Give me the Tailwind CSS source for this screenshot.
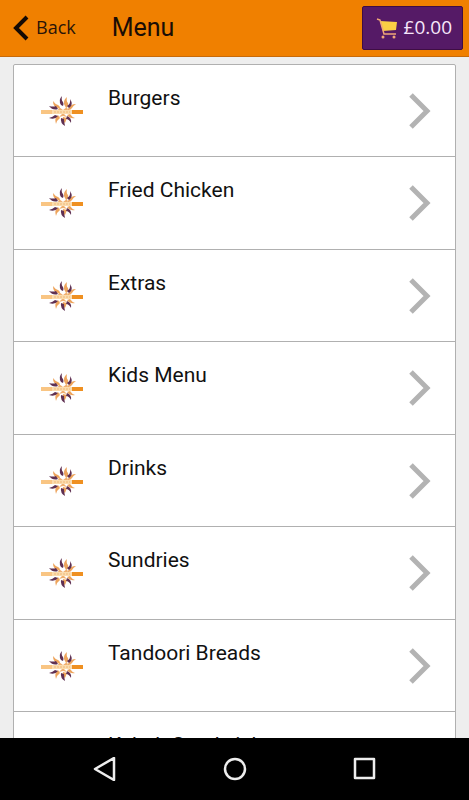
<!DOCTYPE html>
<html lang="en">
<head>
  <meta charset="utf-8"/>
  <meta name="viewport" content="width=device-width, initial-scale=1.0"/>
  <title>Menu</title>
  <script src="https://cdn.jsdelivr.net/npm/@tailwindcss/browser@4"></script>
</head>
<body class="bg-[#eeeeee] font-[Roboto,sans-serif] text-[#111111]">
  <svg class="hidden">
    <symbol id="logo" viewBox="0 0 44 36">
      <!-- flames -->
      <g fill="#eda45c">
        <path d="M25 13q-3-5 2-9q-1 4 1 6q1 3-2 5z"/>
        <path d="M28 16q2-5 8-5q-3 2-4 4q-1 2-4 2z"/>
        <path d="M18 15q-5-1-5-7q2 3 5 4q2 1 2 3z"/>
        <path d="M18 22q-4 3-2 9q1-4 4-6z"/>
        <path d="M27 22q3 4 8 3q-3-1-5-4z"/>
        <path d="M23 24q-1 4 2 6l2-5z"/>
      </g>
      <g fill="#5f3052">
        <path d="M21 12q-3-5 1-9q-1 4 1 6q1 2 0 4z"/>
        <path d="M27 13q4-2 3-7q4 6-1 9z"/>
        <path d="M18 16q-5 2-9-3q4 1 7 0z"/>
        <path d="M18 23q-3 4-9 2q4-1 6-3z"/>
        <path d="M21 25q-1 5 4 8q-1-4-1-7z"/>
        <path d="M27 23q5 2 4 7q-2-4-5-4z"/>
      </g>
      <path d="M19 14l4 3 4-3 1 3H18zM19 24l4-4 4 4-4-1z" fill="#f0b070"/>
      <path d="M1 17h11v4H1z" fill="#f9c583"/>
      <path d="M12 17h20v4H12z" fill="#fbdcae"/>
      <path d="M14 19h16" stroke="#f0b878" stroke-width="1" stroke-dasharray="2 1"/>
      <path d="M32 17h11v4H32z" fill="#ef9021"/>
    </symbol>
    <symbol id="chevron" viewBox="0 0 24 40">
      <path d="M4 4l16 16L4 36" fill="none" stroke="#b3b3b3" stroke-width="5"/>
    </symbol>
  </svg>

  <div class="flex h-screen flex-col overflow-hidden">
    <header class="flex h-[57px] shrink-0 items-center border-b border-[#c76a0a] bg-[#f08000] pr-1.5 pl-3">
      <a href="#" class="flex items-center gap-1.5 font-['Open_Sans',sans-serif] text-[18px] text-[#2a1408]">
        <svg class="h-7 w-[18px]" viewBox="0 0 18 28" fill="none" stroke="#140a04" stroke-width="4">
          <path d="M15 3L4 14l11 11"/>
        </svg>
        <span class="pb-0.5">Back</span>
      </a>
      <h1 class="ml-9 flex-1 text-[25px] text-[#1a0d05]">Menu</h1>
      <button class="flex h-11 w-[101px] items-center justify-end gap-1.5 rounded-xs border border-[#3f0d44] bg-[#551a66] pr-2.5 font-['Open_Sans',sans-serif] text-[19px] text-[#f6e6fa]">
        <svg class="h-[22px] w-[22px]" viewBox="0 0 22 22">
          <path d="M4 4l17 1-1 8-13 1z" fill="#fbcf45"/>
          <path d="M1 2l3 1 4 14h12" fill="none" stroke="#f0a878" stroke-width="1.5"/>
          <circle cx="7" cy="20" r="1.5" fill="#f0a878"/>
          <circle cx="18" cy="20" r="1.5" fill="#f0a878"/>
        </svg>
        <span class="pb-0.5">£0.00</span>
      </button>
    </header>

    <main class="min-h-0 flex-1 overflow-hidden px-[13px] pt-[7px]">
      <ul class="rounded-t-xs border border-[#b0b0b0] bg-white text-[21px] leading-6">
        <li class="h-[92px] border-b border-[#b0b0b0]">
          <a href="#" class="flex h-full items-center pr-6 pl-[26px]">
            <svg class="h-9 w-11"><use href="#logo"/></svg>
            <span class="ml-6 flex-1 self-start pt-[21px]">Burgers</span>
            <svg class="h-10 w-6"><use href="#chevron"/></svg>
          </a>
        </li>
        <li class="h-[93px] border-b border-[#b0b0b0]">
          <a href="#" class="flex h-full items-center pr-6 pl-[26px]">
            <svg class="h-9 w-11"><use href="#logo"/></svg>
            <span class="ml-6 flex-1 self-start pt-[21px]">Fried Chicken</span>
            <svg class="h-10 w-6"><use href="#chevron"/></svg>
          </a>
        </li>
        <li class="h-[92px] border-b border-[#b0b0b0]">
          <a href="#" class="flex h-full items-center pr-6 pl-[26px]">
            <svg class="h-9 w-11"><use href="#logo"/></svg>
            <span class="ml-6 flex-1 self-start pt-[21px]">Extras</span>
            <svg class="h-10 w-6"><use href="#chevron"/></svg>
          </a>
        </li>
        <li class="h-[93px] border-b border-[#b0b0b0]">
          <a href="#" class="flex h-full items-center pr-6 pl-[26px]">
            <svg class="h-9 w-11"><use href="#logo"/></svg>
            <span class="ml-6 flex-1 self-start pt-[21px]">Kids Menu</span>
            <svg class="h-10 w-6"><use href="#chevron"/></svg>
          </a>
        </li>
        <li class="h-[92px] border-b border-[#b0b0b0]">
          <a href="#" class="flex h-full items-center pr-6 pl-[26px]">
            <svg class="h-9 w-11"><use href="#logo"/></svg>
            <span class="ml-6 flex-1 self-start pt-[21px]">Drinks</span>
            <svg class="h-10 w-6"><use href="#chevron"/></svg>
          </a>
        </li>
        <li class="h-[93px] border-b border-[#b0b0b0]">
          <a href="#" class="flex h-full items-center pr-6 pl-[26px]">
            <svg class="h-9 w-11"><use href="#logo"/></svg>
            <span class="ml-6 flex-1 self-start pt-[21px]">Sundries</span>
            <svg class="h-10 w-6"><use href="#chevron"/></svg>
          </a>
        </li>
        <li class="h-[92px] border-b border-[#b0b0b0]">
          <a href="#" class="flex h-full items-center pr-6 pl-[26px]">
            <svg class="h-9 w-11"><use href="#logo"/></svg>
            <span class="ml-6 flex-1 self-start pt-[21px]">Tandoori Breads</span>
            <svg class="h-10 w-6"><use href="#chevron"/></svg>
          </a>
        </li>
        <li class="h-[93px]">
          <a href="#" class="flex h-full items-center pr-6 pl-[26px]">
            <svg class="h-9 w-11"><use href="#logo"/></svg>
            <span class="ml-6 flex-1 self-start pt-[21px]">Kebab Sandwich</span>
            <svg class="h-10 w-6"><use href="#chevron"/></svg>
          </a>
        </li>
      </ul>
    </main>

    <nav class="flex h-[62px] shrink-0 items-center justify-center gap-[106px] bg-black">
      <button aria-label="Back">
        <svg class="h-6 w-6" viewBox="0 0 24 24" fill="none" stroke="#eeeeee" stroke-width="2.5" stroke-linejoin="round"><path d="M21 1v22L2 12z"/></svg>
      </button>
      <button aria-label="Home">
        <svg class="h-6 w-6" viewBox="0 0 24 24" fill="none" stroke="#eeeeee" stroke-width="2.5"><circle cx="12" cy="12" r="10"/></svg>
      </button>
      <button aria-label="Recent apps">
        <svg class="h-6 w-6" viewBox="0 0 24 24" fill="none" stroke="#eeeeee" stroke-width="2.5" stroke-linejoin="round"><path d="M2 2h19v19H2z"/></svg>
      </button>
    </nav>
  </div>
</body>
</html>
